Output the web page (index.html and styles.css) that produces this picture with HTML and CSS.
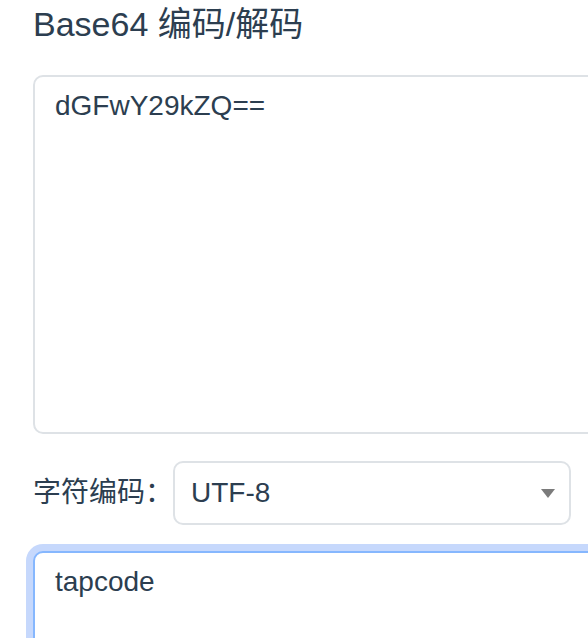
FILE: index.html
```html
<!DOCTYPE html>
<html lang="zh-CN">
<head>
<meta charset="utf-8">
<title>Base64 编码/解码</title>
<link rel="stylesheet" href="styles.css">
</head>
<body>
<div class="page">
  <h1 class="title">Base64 编码/解码</h1>
  <textarea class="field field-input">dGFwY29kZQ==</textarea>
  <div class="charset-row">
    <label class="charset-label">字符编码：</label>
    <div class="select">
      <span class="select-value">UTF-8</span>
      <svg class="select-arrow" width="14" height="9" viewBox="0 0 14 9"><path d="M0 0 H14 L7 9 Z" fill="#7b7b7b"/></svg>
    </div>
  </div>
  <textarea class="field field-output is-focused">tapcode</textarea>
</div>
</body>
</html>
```

FILE: styles.css
```css
html, body {
  margin: 0;
  padding: 0;
  overflow: hidden;
  background: #ffffff;
}

body {
  font-family: "Liberation Sans", Arial, "Noto Sans CJK SC", sans-serif;
  color: #2c3e50;
}

.page {
  display: flex;
  flex-direction: column;
  align-items: flex-start;
  padding: 2px 0 0 33px;
  width: 640px;
}

.title {
  margin: 0;
  font-size: 34px;
  line-height: 44px;
  font-weight: 400;
  color: #2c3e50;
  white-space: nowrap;
}

.field {
  box-sizing: border-box;
  display: block;
  width: 620px;
  border: 2px solid #dee2e6;
  border-radius: 10px;
  padding: 8px 20px;
  font-family: "Liberation Sans", Arial, "Noto Sans CJK SC", sans-serif;
  font-size: 28px;
  line-height: 42px;
  color: #2c3e50;
  background: #ffffff;
  resize: vertical;
  outline: none;
}

.field-input {
  margin-top: 29px;
  height: 359px;
}

.charset-row {
  display: flex;
  align-items: center;
  margin-top: 27px;
}

.charset-label {
  font-family: "Liberation Sans", "Noto Sans CJK SC", sans-serif;
  font-size: 28px;
  line-height: 40px;
  width: 140px;
  white-space: nowrap;
}

.select {
  box-sizing: border-box;
  width: 398px;
  height: 64px;
  border: 2px solid #dee2e6;
  border-radius: 10px;
  display: flex;
  align-items: center;
  justify-content: space-between;
  padding: 0 14px 0 16px;
  font-size: 28px;
  color: #2c3e50;
  background: #ffffff;
}

.select-value {
  line-height: 40px;
}

.select-arrow {
  display: block;
}

.field-output {
  margin-top: 26px;
  height: 200px;
}

.is-focused {
  border-color: #86b7fe;
  box-shadow: 0 0 0 7px #c6d8fc;
}
```
